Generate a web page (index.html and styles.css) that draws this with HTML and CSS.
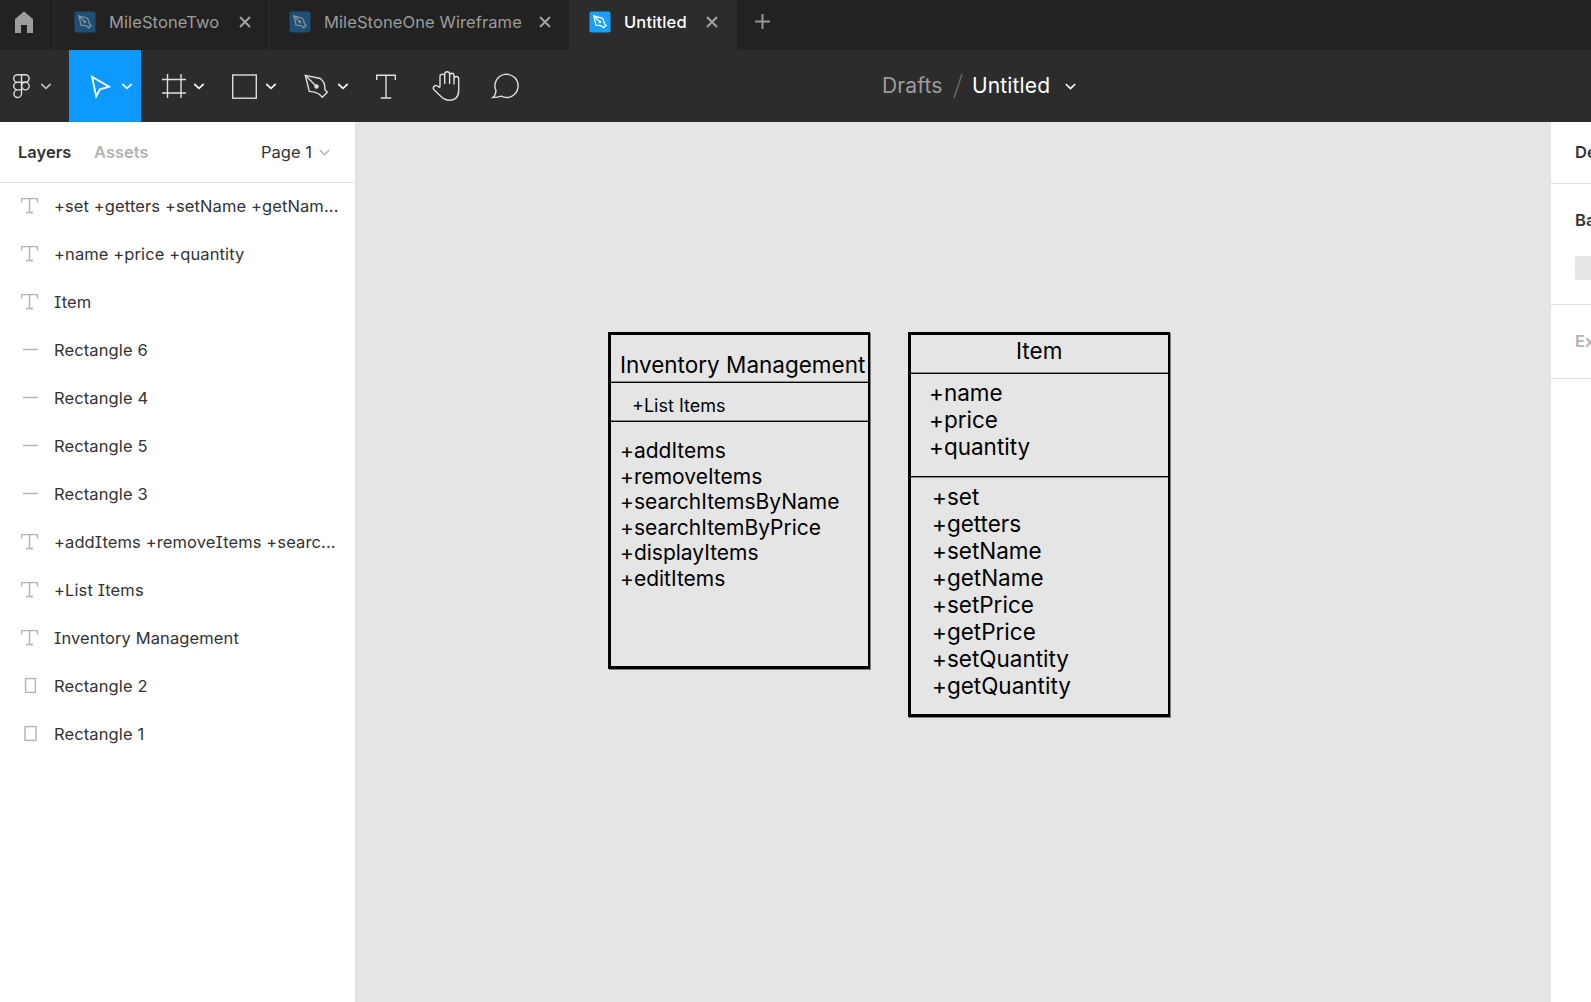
FILE: index.html
```html
<!DOCTYPE html>
<html lang="en">
<head>
<meta charset="utf-8">
<title>Untitled</title>
<link rel="stylesheet" href="styles.css">
</head>
<body>
<svg class="defs" width="0" height="0" aria-hidden="true">
  <symbol id="doc" viewBox="0 0 22 22">
    <rect x=".5" y=".5" width="21" height="21" rx="2" class="doc-bg"/>
    <g class="doc-pen">
      <path d="M5 5 7 14.200C9.500 14.200 11.500 14.500 13 15.300L14.600 16.800 17 14.400 15.500 12.800C15.200 10.500 14.500 8.700 13.300 7.200Z"/>
      <path d="M5 5 10.600 10.600"/>
      <circle cx="10.900" cy="10.900" r=".7"/>
    </g>
  </symbol>
  <symbol id="cross" viewBox="0 0 12 12"><path d="M1 1 11 11M11 1 1 11"/></symbol>
  <symbol id="type" viewBox="0 0 18 18"><path d="M.7 5.500V1.600H16.300V5.500M8.500 1.600V15.500M5 15.500H12"/></symbol>
  <symbol id="line" viewBox="0 0 18 18"><path d="M2 8.500H17"/></symbol>
</svg>

<header class="tabs">
  <div class="home">
    <svg width="54" height="50" viewBox="0 0 54 50"><path d="M24 11.500 33 19V33H27V25H21V33H15V19Z"/></svg>
  </div>
  <div class="tab tab-one"><svg class="doc"><use href="#doc"/></svg><span>MileStoneTwo</span><svg class="cross"><use href="#cross"/></svg></div>
  <div class="tab tab-two"><svg class="doc"><use href="#doc"/></svg><span>MileStoneOne Wireframe</span><svg class="cross"><use href="#cross"/></svg></div>
  <div class="tab tab-active"><svg class="doc"><use href="#doc"/></svg><span>Untitled</span><svg class="cross"><use href="#cross"/></svg></div>
  <div class="add"><svg width="15" height="15" viewBox="0 0 15 15"><path d="M7.500 0V15M0 7.500H15"/></svg></div>
</header>

<nav class="toolbar">
  <svg class="tool" width="69" height="72" viewBox="0 50 69 72">
    <path d="M21.500 74.700H17.500A3.800 3.800 0 0 0 17.500 82.300H21.500ZM21.500 74.700H25.300A3.800 3.800 0 0 1 25.300 82.300H21.500ZM21.500 82.300H17.500A3.800 3.800 0 0 0 17.500 89.900H21.500ZM21.500 89.900H17.500A3.800 3.800 0 1 0 21.500 93.700Z"/>
    <circle cx="25.400" cy="86.100" r="3.800"/>
    <path class="chev dim" d="M41.300 84 46 88.300 50.700 84"/>
  </svg>
  <svg class="tool tool-active" width="72" height="72" viewBox="69 50 72 72">
    <path class="bold" d="M92 76.800 109 86.700 100 89.300 96.200 96.500Z"/>
    <path class="chev" d="M122.300 84 127 88.300 131.700 84"/>
  </svg>
  <svg class="tool" width="72" height="72" viewBox="141 50 72 72">
    <path d="M167.500 74V98M181 74V98M162 79.500H186M162 93H186"/>
    <path class="chev" d="M194.300 84 199 88.300 203.700 84"/>
  </svg>
  <svg class="tool" width="72" height="72" viewBox="213 50 72 72">
    <rect x="232.700" y="75" width="23.600" height="23.200"/>
    <path class="chev" d="M266.300 84 271 88.300 275.700 84"/>
  </svg>
  <svg class="tool" width="72" height="72" viewBox="285 50 72 72">
    <path d="M305.300 75.300 309.300 91.400C313 91.500 316.300 92.300 319 94L322.300 97.200 327.300 92.200 324.800 89.400C325.200 85 323.600 80.800 320.300 78.500Z"/>
    <path d="M305.300 75.300 315.500 85.600"/>
    <circle class="solid" cx="316.500" cy="86.500" r="2.200"/>
    <path class="chev" d="M338.300 84 343 88.300 347.700 84"/>
  </svg>
  <svg class="tool" width="59" height="72" viewBox="357 50 59 72">
    <path d="M376.700 80V75.200H395.300V80M386 75.200V98M380.700 98H391.300"/>
  </svg>
  <svg class="tool" width="60" height="72" viewBox="416 50 60 72">
    <path d="M440 87.600V76.500C440 73.300 444.700 73.300 444.700 76.500V84M444.700 84V74C444.700 70.900 449.600 70.900 449.600 74V84M449.600 76C449.600 72.300 454 72.300 454 76V84.500M454 79C454 75.600 458.700 75.600 458.700 79V90C458.700 97 455 100.200 449.500 100.200C444.500 100.200 442.500 98 440.500 96L434 89.800C432 87.500 434.700 84.600 437.300 86L440 87.600"/>
  </svg>
  <svg class="tool" width="60" height="72" viewBox="476 50 60 72">
    <path d="M492.800 97.600C495 96 495.700 94 496 90.800A11.600 11.600 0 1 1 501.200 96.200C498.500 97.300 496 97.600 492.800 97.600Z"/>
  </svg>
  <div class="file">
    <span class="folder">Drafts</span>
    <svg width="10" height="26" viewBox="0 0 10 26"><path d="M9 1 1 25"/></svg>
    <span class="name">Untitled</span>
    <svg class="file-chev" width="11" height="7" viewBox="0 0 11 7"><path d="M.8 1 5.500 5.500 10.200 1"/></svg>
  </div>
</nav>

<main class="work">
  <aside class="left">
    <div class="left-head">
      <span class="on">Layers</span>
      <span class="off">Assets</span>
      <span class="page">Page 1</span>
      <svg width="11" height="7" viewBox="0 0 11 7"><path d="M.8 1 5.500 5.700 10.200 1"/></svg>
    </div>
    <ul class="layers">
      <li><svg><use href="#type"/></svg><span>+set +getters +setName +getNam...</span></li>
      <li><svg><use href="#type"/></svg><span>+name +price +quantity</span></li>
      <li><svg><use href="#type"/></svg><span>Item</span></li>
      <li><svg><use href="#line"/></svg><span>Rectangle 6</span></li>
      <li><svg><use href="#line"/></svg><span>Rectangle 4</span></li>
      <li><svg><use href="#line"/></svg><span>Rectangle 5</span></li>
      <li><svg><use href="#line"/></svg><span>Rectangle 3</span></li>
      <li><svg><use href="#type"/></svg><span>+addItems +removeItems +searc...</span></li>
      <li><svg><use href="#type"/></svg><span>+List Items</span></li>
      <li><svg><use href="#type"/></svg><span>Inventory Management</span></li>
      <li><svg viewBox="0 0 18 18"><rect x="4.600" y="1.600" width="9.800" height="13.800"/></svg><span>Rectangle 2</span></li>
      <li><svg viewBox="0 0 18 18"><rect x="4" y="1.600" width="11" height="13.800"/></svg><span>Rectangle 1</span></li>
    </ul>
  </aside>

  <section class="canvas">
    <div class="uml inventory">
      <h2>Inventory Management</h2>
      <p class="attrs">+List Items</p>
      <p class="methods">+addItems<br>+removeItems<br>+searchItemsByName<br>+searchItemByPrice<br>+displayItems<br>+editItems</p>
    </div>
    <div class="uml item">
      <h2>Item</h2>
      <p class="attrs">+name<br>+price<br>+quantity</p>
      <p class="methods">+set<br>+getters<br>+setName<br>+getName<br>+setPrice<br>+getPrice<br>+setQuantity<br>+getQuantity</p>
    </div>
  </section>

  <aside class="right">
    <div class="r-head">De</div>
    <div class="r-bg"><span>Ba</span><i class="swatch"></i></div>
    <div class="r-export">Ex</div>
  </aside>
</main>
</body>
</html>
```

FILE: styles.css
```css
* { box-sizing: border-box; margin: 0; padding: 0; }

body {
  width: 1591px;
  height: 1002px;
  display: flex;
  flex-direction: column;
  overflow: hidden;
  background: #fff;
  color: #333;
  font: 400 16.5px/24px Inter, "Liberation Sans", sans-serif;
}

svg { display: block; flex: none; fill: none; }
.defs { position: absolute; }

/* Tab strip */
.tabs { display: flex; height: 50px; flex: none; background: #222; color: #9c9c9c; letter-spacing: .1px; }
.home { width: 55px; border-right: 1px solid #2f2f2f; }
.home path { fill: #9c9c9c; }
.tab { display: flex; align-items: center; height: 50px; padding: 0 18px 6px 19px; white-space: nowrap; }
.tab span { flex: 1; margin-left: 13px; }
.tab-one { width: 215px; border-right: 1px solid #2f2f2f; }
.tab-two { width: 299px; }
.tab-active { width: 168px; padding-left: 20px; padding-right: 19px; background: #2c2c2c; color: #fff; font-weight: 500; letter-spacing: .15px; }
.doc { width: 22px; height: 22px; }
.doc-bg { fill: var(--bg, #1d5077); }
.doc-pen { stroke: var(--ink, #8b9296); stroke-width: 1.3; }
.tab-active .doc { --bg: #18a0fb; --ink: #fff; }
.cross { width: 12px; height: 12px; stroke: #a2a2a2; stroke-width: 2; }
.add { padding: 14px 0 0 18px; }
.add svg { stroke: #969696; stroke-width: 2; }

/* Toolbar */
.toolbar { display: flex; height: 72px; flex: none; background: #2c2c2c; }
.tool { stroke: #dedede; stroke-width: 1.4; }
.tool-active { background: #0d99ff; stroke: #fff; }
.tool .bold { stroke-width: 1.8; }
.tool .chev { stroke: #f4f4f4; stroke-width: 1.7; }
.tool .dim { stroke: #bbb; }
.tool .solid { fill: #dedede; stroke: none; }
.file { display: flex; align-items: center; height: 72px; margin-left: 346px; font-size: 21px; line-height: 26px; letter-spacing: .15px; }
.folder { width: 71px; color: #9d9d9d; }
.file svg { stroke: #6b6b6b; stroke-width: 1.4; }
.name { width: 93px; margin-left: 9px; color: #fff; }
.file .file-chev { stroke: #fff; stroke-width: 1.7; }

/* Work area */
.work { display: flex; flex: 1; min-height: 0; }
.left { width: 355px; flex: none; background: #fff; }
.left-head { display: flex; align-items: center; width: 354px; height: 61px; padding-left: 18px; border-bottom: 1px solid #e0e0e0; }
.on { width: 76px; font-weight: 600; }
.off { width: 167px; font-weight: 600; color: #b3b3b3; }
.page { width: 58px; }
.left-head svg { stroke: #b3b3b3; stroke-width: 1.6; }
.layers { list-style: none; font-feature-settings: "cv08"; }
.layers li { display: flex; align-items: center; height: 48px; padding: 0 0 2px 21px; white-space: nowrap; }
.layers svg { width: 18px; height: 18px; stroke: #b3b3b3; stroke-width: 1.4; }
.layers span { margin-left: 15px; letter-spacing: .11px; }

.canvas { position: relative; flex: 1; background: #e5e5e5; color: #000; }
.uml { position: absolute; top: 210px; width: 262px; border: 3px solid #000; border-right-width: 2px; box-shadow: 1px 1px 0 #7c7c7c; font-size: 22.5px; line-height: 27px; white-space: nowrap; }
.uml h2 { font-size: 22.5px; font-weight: 400; border-bottom: 1px solid #000; box-shadow: inset 0 -1px #8a8a8a; }
.uml .attrs { border-bottom: 1px solid #000; box-shadow: inset 0 -1px #8a8a8a; }
.inventory { left: 253px; height: 337px; }
.inventory h2 { height: 48px; padding: 16px 0 0 9px; }
.inventory .attrs { height: 39px; padding: 9px 0 0 21px; font-size: 18px; }
.inventory .methods { padding: 16px 0 0 9px; font-size: 21px; line-height: 25.5px; }
.item { left: 553px; height: 385px; }
.item h2 { height: 39px; padding: 2px 0 0 105px; }
.item .attrs { height: 103px; padding: 5px 0 0 18px; box-shadow: 0 1px #8a8a8a; }
.item .methods { padding: 6px 0 0 21px; }

/* Properties panel, running off the window's right edge */
.right { width: 40px; flex: none; overflow: hidden; background: #fff; font-weight: 600; white-space: nowrap; }
.right > div { padding-left: 24px; border-bottom: 1px solid #e0e0e0; }
.r-head { height: 62px; padding-top: 18px; }
.r-bg { height: 121px; padding-top: 24px; }
.swatch { display: block; width: 60px; height: 24px; margin-top: 24px; border-radius: 2px; background: #e5e5e5; }
.r-export { height: 74px; padding-top: 24px; color: #b3b3b3; }
```
